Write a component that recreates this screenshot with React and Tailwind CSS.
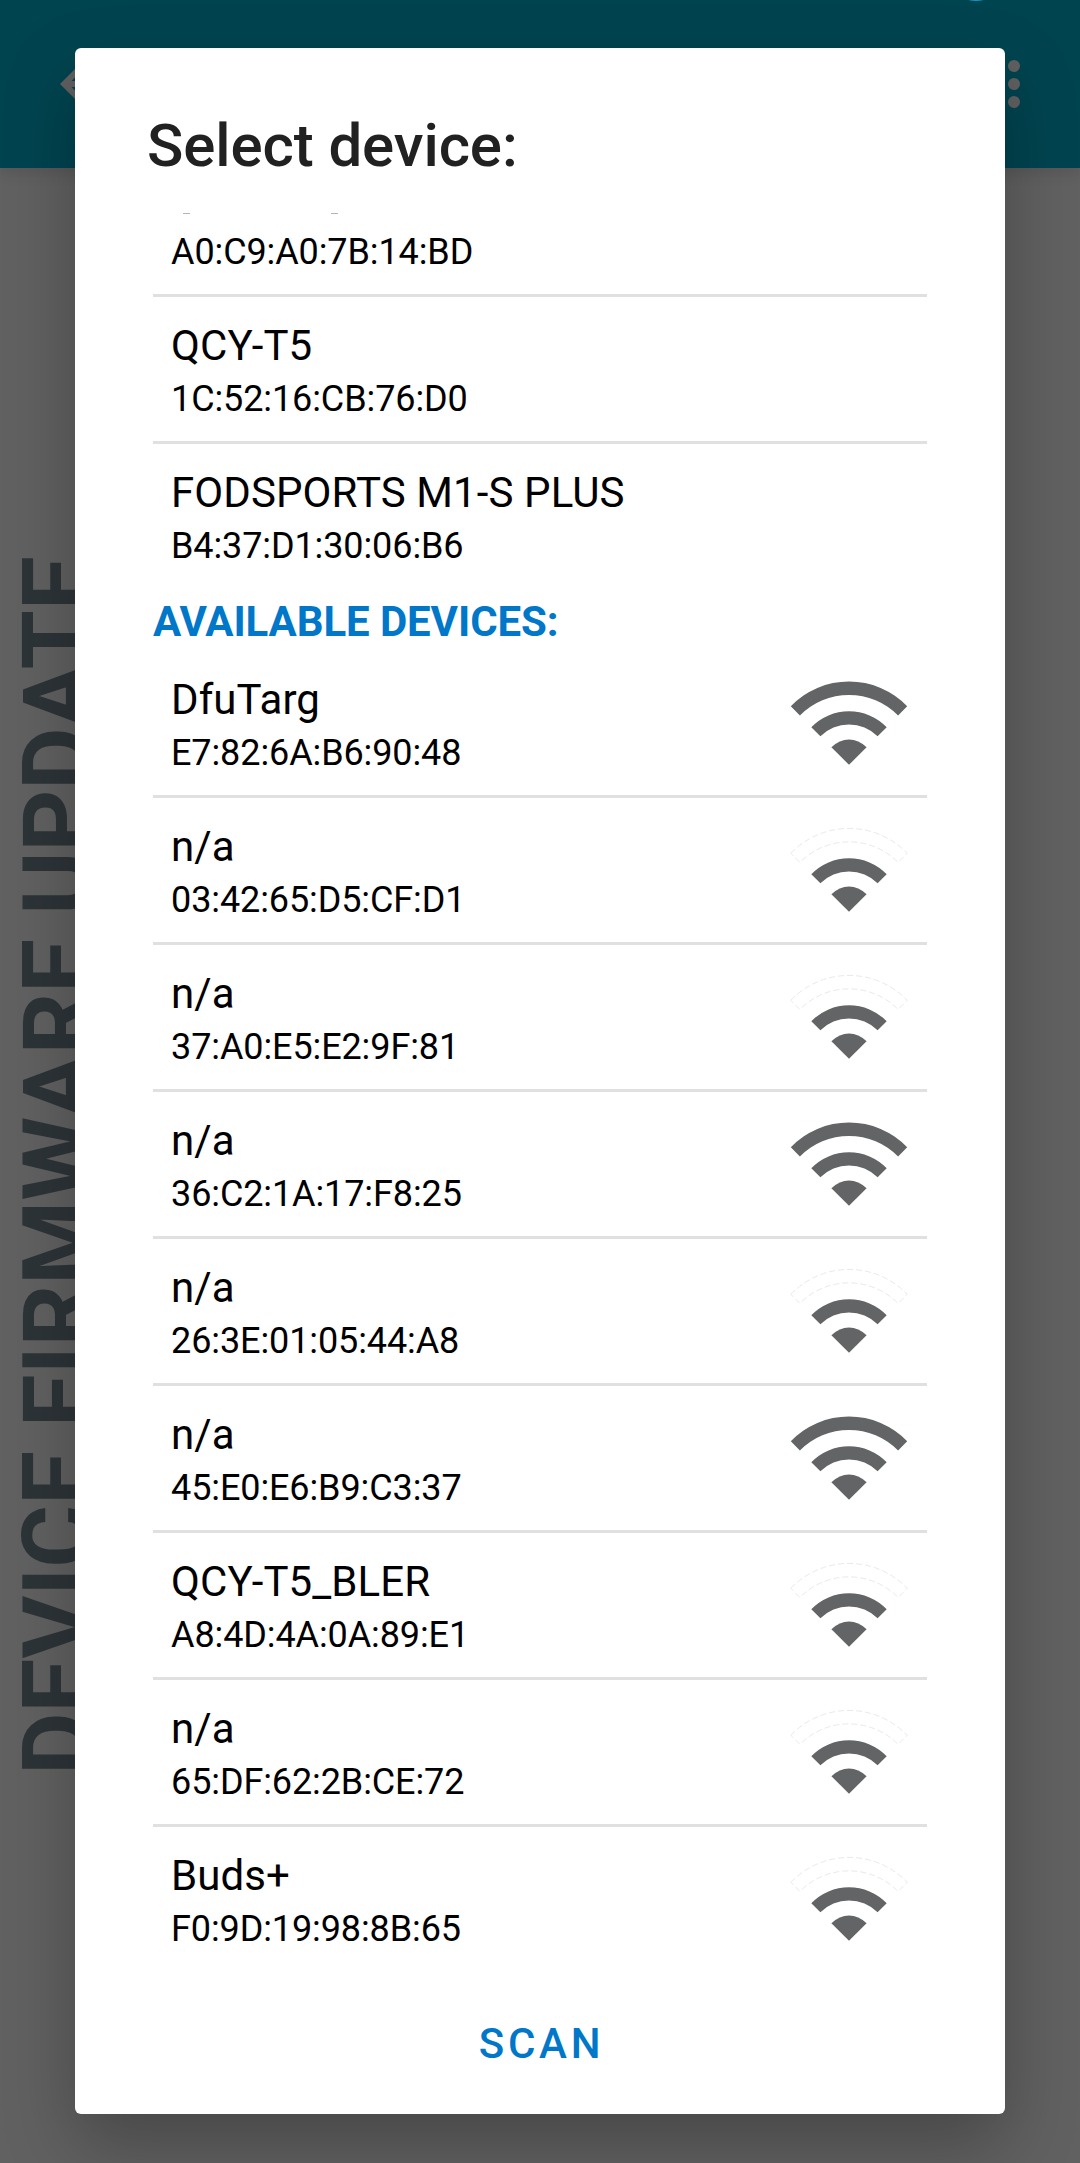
const pairedDevices = [
  { name: "QCY-T5", address: "1C:52:16:CB:76:D0" },
  { name: "FODSPORTS M1-S PLUS", address: "B4:37:D1:30:06:B6" },
];

const availableDevices = [
  { name: "DfuTarg", address: "E7:82:6A:B6:90:48", strong: true },
  { name: "n/a", address: "03:42:65:D5:CF:D1", strong: false },
  { name: "n/a", address: "37:A0:E5:E2:9F:81", strong: false },
  { name: "n/a", address: "36:C2:1A:17:F8:25", strong: true },
  { name: "n/a", address: "26:3E:01:05:44:A8", strong: false },
  { name: "n/a", address: "45:E0:E6:B9:C3:37", strong: true },
  { name: "QCY-T5_BLER", address: "A8:4D:4A:0A:89:E1", strong: false },
  { name: "n/a", address: "65:DF:62:2B:CE:72", strong: false },
  { name: "Buds+", address: "F0:9D:19:98:8B:65", strong: false },
];

function SignalIcon({ strong }) {
  return (
    <svg className="w-[144px] h-[144px] mr-1.5 shrink-0" viewBox="0 0 144 144" fill="#636466">
      <path
        d="M13.8 55.3A80.5 80.5 0 0 1 130.2 55.3L121.1 64.4A69 69 0 0 0 22.9 64.4Z"
        fill={strong ? "#636466" : "none"}
        stroke={strong ? "none" : "#e8eaea"}
        strokeDasharray="6 3"
      />
      <path d="M34.3 76.2A52.5 52.5 0 0 1 109.7 76.2L100.6 85.3A40.3 40.3 0 0 0 43.4 85.3Z" />
      <path d="M72 113.8L54.4 96.2Q62.5 88.4 72 88.4T89.6 96.2Z" />
    </svg>
  );
}

function DeviceRow({ device, last }) {
  return (
    <div className={last ? "" : "border-b-3 border-[#e0e0e0]"}>
      <div className="flex h-[144px] items-center justify-between">
        <div className="pl-[18px] pt-1.5 text-black">
          <p className="text-[42px] leading-[54px] tracking-[0.1px]">{device.name}</p>
          <p className="text-[36px] leading-[52px] tracking-[-0.1px]">{device.address}</p>
        </div>
        {"strong" in device && <SignalIcon strong={device.strong} />}
      </div>
    </div>
  );
}

function Background() {
  return (
    <div className="absolute inset-0 bg-[#616161]">
      <header className="relative flex h-[168px] items-start justify-between bg-[#004450] pl-12 pt-12 shadow-[0_4px_14px_rgba(0,0,0,0.12)]">
        <svg className="h-[72px] w-[72px]" viewBox="0 0 24 24" fill="#616161">
          <path d="M20 11H7.83l5.59-5.59L12 4l-8 8 8 8 1.41-1.41L7.83 13H20v-2z" />
        </svg>
        <svg className="mr-[30px] h-[72px] w-[72px]" viewBox="0 0 72 72" fill="#616161">
          <circle cx="36" cy="18" r="6" />
          <circle cx="36" cy="36" r="6" />
          <circle cx="36" cy="54" r="6" />
        </svg>
        <span className="absolute -top-[59px] left-[946px] h-[60px] w-[60px] rounded-full bg-[#1496c4]" />
      </header>
      <p className="absolute left-[2px] top-[556px] rotate-180 whitespace-nowrap text-[96px] leading-[112px] font-bold text-[#2d3438] [writing-mode:vertical-rl]">
        DEVICE FIRMWARE UPDATE
      </p>
    </div>
  );
}

export default function App() {
  return (
    <div className="relative h-[2163px] w-[1080px] overflow-hidden font-[Roboto,sans-serif]">
      <Background />
      <div className="relative flex h-full px-[75px] pt-12 pb-[49px]">
        <div className="flex w-full flex-col rounded-[6px] bg-white px-[78px] shadow-[0_30px_70px_rgba(0,0,0,0.27)]">
          <h1 className="-ml-1.5 h-[165px] pt-[63px] text-[60px] leading-[70px] font-medium tracking-[-0.1px] text-[#212121]">
            Select device:
          </h1>
          <div className="h-[1758px]">
            {/* row scrolled under the title */}
            <div className="flex h-[84px] flex-col border-b-3 border-[#e0e0e0] pl-[18px]">
              <div className="flex h-px gap-[141px] pl-3">
                <span className="h-px w-[7px] bg-[#b5b5b5]" />
                <span className="h-px w-[7px] bg-[#b5b5b5]" />
              </div>
              <p className="pt-3 text-[36px] leading-[52px] tracking-[-0.1px] text-black">A0:C9:A0:7B:14:BD</p>
            </div>
            {pairedDevices.map((device, i) => (
              <DeviceRow key={device.address} device={device} last={i === pairedDevices.length - 1} />
            ))}
            <h2 className="h-[63px] pt-[9px] text-[42px] leading-[50px] font-bold tracking-[-0.1px] text-[#0077c8]">
              AVAILABLE DEVICES:
            </h2>
            {availableDevices.map((device, i) => (
              <DeviceRow key={device.address} device={device} last={i === availableDevices.length - 1} />
            ))}
          </div>
          <button className="mt-12 self-center pl-[3px] text-[42px] leading-[50px] font-medium tracking-[3.75px] text-[#0077c8]">
            SCAN
          </button>
        </div>
      </div>
    </div>
  );
}
